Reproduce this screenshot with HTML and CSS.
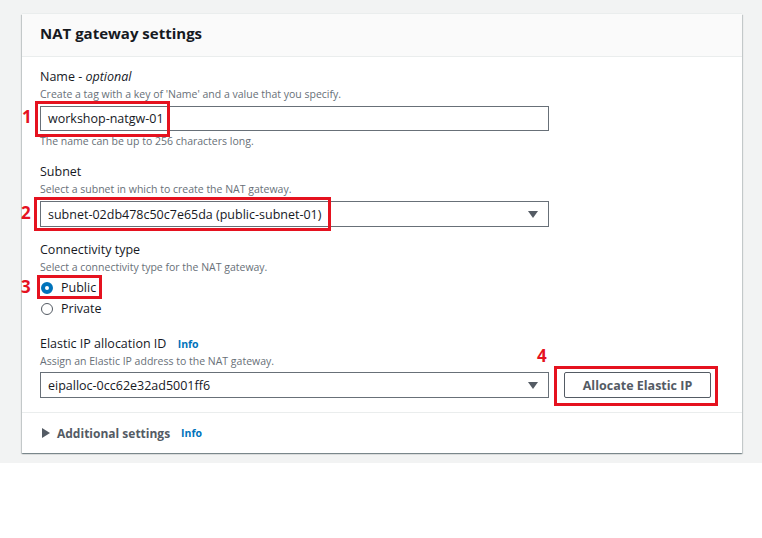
FILE: index.html
```html
<!DOCTYPE html>
<html>
<head>
<meta charset="utf-8">
<link rel="stylesheet" href="styles.css">
</head>
<body>
<div class="page">
  <div class="panel">
    <div class="panel-header"><h2>NAT gateway settings</h2></div>
    <div class="panel-body">
      <div class="field">
        <div class="label">Name - <i>optional</i></div>
        <div class="desc">Create a tag with a key of 'Name' and a value that you specify.</div>
        <div class="input">workshop-natgw-01</div>
        <div class="hint">The name can be up to 256 characters long.</div>
      </div>
      <div class="field">
        <div class="label">Subnet</div>
        <div class="desc">Select a subnet in which to create the NAT gateway.</div>
        <div class="select"><span>subnet-02db478c50c7e65da (public-subnet-01)</span><span class="caret"></span></div>
      </div>
      <div class="field">
        <div class="label">Connectivity type</div>
        <div class="desc">Select a connectivity type for the NAT gateway.</div>
        <div class="radios">
          <div class="radio"><span class="dot checked"></span>Public</div>
          <div class="radio"><span class="dot"></span>Private</div>
        </div>
      </div>
      <div class="field field-eip">
        <div class="label">Elastic IP allocation ID <span class="info">Info</span></div>
        <div class="desc">Assign an Elastic IP address to the NAT gateway.</div>
        <div class="eip-row">
          <div class="select"><span>eipalloc-0cc62e32ad5001ff6</span><span class="caret"></span></div>
          <button class="btn">Allocate Elastic IP</button>
        </div>
      </div>
    </div>
    <div class="expander">
      <span class="tri"></span><span class="exp-title">Additional settings</span><span class="info">Info</span>
    </div>

    <div class="mark box1"></div><div class="num num1">1</div>
    <div class="mark box2"></div><div class="num num2">2</div>
    <div class="mark box3"></div><div class="num num3">3</div>
    <div class="mark box4"></div><div class="num num4">4</div>
  </div>
</div>
</body>
</html>
```

FILE: styles.css
```css
* { box-sizing: border-box; }
html, body { margin: 0; padding: 0; background: #fff; }
body {
  font-family: "Open Sans", "Noto Sans", Arial, sans-serif;
  color: #16191f;
}
.page {
  background: #f2f3f3;
  height: 463px;
  padding: 14px 20px 0 22px;
}
.panel {
  position: relative;
  width: 720px;
  height: 439px;
  background: #fff;
  box-shadow: 0 1px 1px 0 rgba(0,28,36,.3), 1px 1px 1px 0 rgba(0,28,36,.15), -1px 1px 1px 0 rgba(0,28,36,.15), 0 -1px 0 0 #eaeded;
}
.panel-header {
  height: 43px;
  background: #fafafa;
  border-bottom: 1px solid #eaeded;
  padding: 9px 18px 0 18px;
}
.panel-header h2 {
  margin: 0;
  font-size: 15px;
  font-weight: 700;
  line-height: 20px;
}
.panel-body {
  padding: 10px 18px 0 18px;
  border-bottom: 1px solid #eaeded;
  height: 356px;
}
.field { margin-bottom: 13px; }
.label {
  font-size: 12.5px;
  line-height: 18px;
  height: 18px;
  padding-top: 1px;
}
.label i { font-style: italic; }
.desc {
  font-size: 10.5px;
  line-height: 16px;
  color: #687078;
  padding-top: 1px;
  margin-bottom: -1px;
}
.input, .select {
  width: 509px;
  border: 1px solid #687078;
  font-size: 12.5px;
  display: flex;
  align-items: center;
  padding: 0 7px;
}
.input { height: 25px; margin-top: 5px; }
.select { height: 26px; margin-top: 5px; justify-content: space-between; }
.hint {
  font-size: 10.5px;
  line-height: 16px;
  color: #687078;
  margin-top: 2px;
}
.caret {
  width: 0; height: 0;
  border-left: 5px solid transparent;
  border-right: 5px solid transparent;
  border-top: 7px solid #545b64;
  margin-right: 3px;
}
.radios { margin-top: 3px; margin-bottom: 15px; }
.radio {
  display: flex;
  align-items: center;
  font-size: 12.5px;
  height: 21px;
}
.dot {
  width: 12px; height: 12px;
  border-radius: 50%;
  border: 1px solid #545b64;
  margin: 0 8px 0 1px;
}
.dot.checked { border: 4px solid #0073bb; }
.info {
  color: #0073bb;
  font-weight: 700;
  font-size: 10.5px;
  margin-left: 8px;
}
.eip-row {
  display: flex;
  gap: 15px;
  align-items: flex-end;
}
.eip-row .select { margin-top: 4px; }
.btn {
  width: 147px;
  height: 26px;
  background: #fff;
  border: 1px solid #545b64;
  border-radius: 2px;
  font-family: inherit;
  font-size: 12.5px;
  font-weight: 700;
  color: #545b64;
  padding: 0;
}
.expander {
  height: 40px;
  display: flex;
  align-items: center;
  padding-left: 20px;
}
.tri {
  width: 0; height: 0;
  border-top: 5px solid transparent;
  border-bottom: 5px solid transparent;
  border-left: 8px solid #545b64;
  margin-right: 7px;
}
.exp-title {
  font-size: 12px;
  font-weight: 700;
  color: #545b64;
}
.expander .info { margin-left: 11px; }

.mark {
  position: absolute;
  border: 3px solid #e5121f;
}
.box1 { left: 13px; top: 87px; width: 135px; height: 36px; }
.box2 { left: 12px; top: 183px; width: 297px; height: 34px; }
.box3 { left: 15px; top: 261px; width: 65px; height: 24px; }
.box4 { left: 532px; top: 352px; width: 164px; height: 40px; }
.num {
  position: absolute;
  color: #e5121f;
  font-weight: 700;
  font-size: 17px;
  line-height: 20px;
}
.num1 { left: 0; top: 93px; }
.num2 { left: -1px; top: 189px; }
.num3 { left: -1px; top: 263px; }
.num4 { left: 515px; top: 332px; }
```
